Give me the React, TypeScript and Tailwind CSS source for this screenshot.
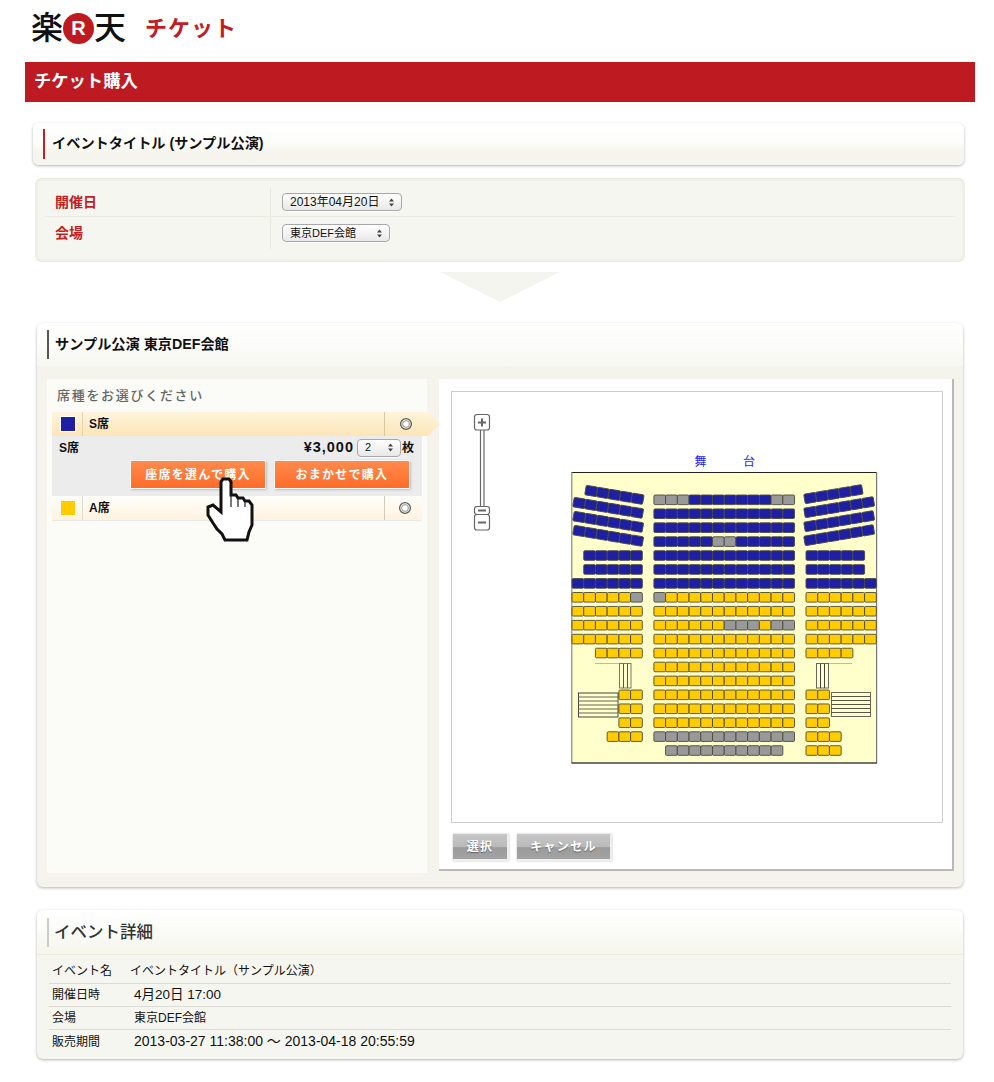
import React from "react";

const seatFill: Record<string, string> = {
  b: "#1f1fa3",
  y: "#ffcc00",
  g: "#999999",
};

const PITCH = 11.72;
const rowY = (i: number) => 495 + i * 13.93;

// one string per row, blank = no seat
const centerRows = [
  "gggbbbbbbbgg",
  "bbbbbbbbbbbb",
  "bbbbbbbbbbbb",
  "bbbbbggbbbbb",
  "bbbbbbbbbbbb",
  "bbbbbbbbbbbb",
  "bbbbbbbbbbbb",
  "gyyyyyyyyyyy",
  "yyyyyyyyyyyy",
  "yyyyyygggygg",
  "yyyyyyyyyyyy",
  "yyyyyyyyyyyy",
  "yyyyyyyyyyyy",
  "yyyyyyyyyyyy",
  "yyyyyyyyyyyy",
  "yyyyyyyyyyyy",
  "yyyyyyyyyyyy",
  "gggggggggggg",
  " gggggggggg ",
];

const leftRows: Record<number, string> = {
  4: " bbbbb",
  5: " bbbbb",
  6: "bbbbbb",
  7: "yyyyyg",
  8: "yyyyyy",
  9: "yyyyyy",
  10: "yyyyyy",
  11: "  yyyy",
  14: "    yy",
  15: "    yy",
  16: "    yy",
  17: "   yyy",
};

const rightRows: Record<number, string> = {
  4: "bbbbb",
  5: "bbbbb",
  6: "bbbbbb",
  7: "yyyyyy",
  8: "yyyyyy",
  9: "yyyyyy",
  10: "yyyyyy",
  11: "yyyy",
  14: "yy",
  15: "yy",
  16: "yy",
  17: "yyy",
  18: "yyy",
};

const slantRows = [
  { x: 585.5, y: 490, n: 5, a: 9.5 },
  { x: 573.5, y: 502, n: 6, a: 9.5 },
  { x: 573.5, y: 516, n: 6, a: 9.5 },
  { x: 573.5, y: 530, n: 6, a: 9.5 },
  { x: 804.5, y: 499, n: 5, a: -9.5 },
  { x: 804.5, y: 513, n: 6, a: -9.5 },
  { x: 804.5, y: 527, n: 6, a: -9.5 },
  { x: 804.5, y: 541, n: 6, a: -9.5 },
];

const Seat = ({ x, y, t }: { x: number; y: number; t: string }) =>
  t === " " ? null : (
    <rect
      x={x}
      y={y}
      width={PITCH}
      height={9.6}
      rx={1.2}
      fill={seatFill[t]}
      stroke="#4a4a40"
      strokeWidth={0.9}
    />
  );

const SeatRow = ({ x, i, row }: { x: number; i: number; row: string }) => (
  <>
    {row.split("").map((t, k) => (
      <Seat key={k} x={x + k * PITCH} y={rowY(i)} t={t} />
    ))}
  </>
);

const stairLines = [4, 8, 12, 16, 20];

const SeatMap = () => (
  <svg width={330} height={320} viewBox="560 450 330 320" className="block">
    <text x={694.5} y={466} fontSize={12} fill="#2222ee" fontFamily="'Noto Sans CJK JP', sans-serif">
      舞
    </text>
    <text x={743} y={466} fontSize={12} fill="#2222ee" fontFamily="'Noto Sans CJK JP', sans-serif">
      台
    </text>
    <rect x={572} y={472.5} width={304.5} height={290.5} fill="#ffffcc" />
    <line x1={571.5} y1={472.5} x2={877} y2={472.5} stroke="#222" />
    <line x1={571.8} y1={472} x2={571.8} y2={763} stroke="#8a8a80" strokeWidth={1.2} />
    <line x1={876.6} y1={472} x2={876.6} y2={763} stroke="#777" strokeWidth={1.2} />
    <line x1={571.5} y1={763} x2={877} y2={763} stroke="#444" strokeWidth={1.4} />

    {centerRows.map((row, i) => (
      <SeatRow key={i} x={653.9} i={i} row={row} />
    ))}
    {Object.entries(leftRows).map(([i, row]) => (
      <SeatRow key={i} x={572} i={Number(i)} row={row} />
    ))}
    {Object.entries(rightRows).map(([i, row]) => (
      <SeatRow key={i} x={806} i={Number(i)} row={row} />
    ))}
    {slantRows.map((r, i) => (
      <g key={i} transform={`rotate(${r.a} ${r.x} ${r.y})`}>
        {Array.from({ length: r.n }).map((_, k) => (
          <Seat key={k} x={r.x + k * PITCH} y={r.y - 4.8} t="b" />
        ))}
      </g>
    ))}

    {/* stairs left */}
    <line x1={595} y1={663.5} x2={619} y2={663.5} stroke="#bdbd9c" />
    <rect x={619.5} y={663.5} width={11.5} height={24.5} fill="none" stroke="#77776a" />
    <line x1={623.5} y1={664} x2={623.5} y2={688} stroke="#555" />
    <line x1={627.5} y1={664} x2={627.5} y2={688} stroke="#555" />
    <rect x={578.5} y={693} width={39.5} height={24} fill="none" stroke="#444" />
    {stairLines.map((d) => (
      <line key={d} x1={578.5} y1={693 + d} x2={618} y2={693 + d} stroke="#66665a" />
    ))}

    {/* stairs right */}
    <line x1={828.5} y1={663.5} x2={852} y2={663.5} stroke="#bdbd9c" />
    <rect x={816.5} y={663.5} width={12} height={24.5} fill="none" stroke="#66665a" />
    <line x1={820.5} y1={664} x2={820.5} y2={688} stroke="#444" />
    <line x1={824.5} y1={664} x2={824.5} y2={688} stroke="#444" />
    <rect x={831.5} y={692.5} width={39} height={24} fill="none" stroke="#66665a" />
    {stairLines.map((d) => (
      <line key={d} x1={831.5} y1={692.5 + d} x2={870.5} y2={692.5 + d} stroke="#55554a" />
    ))}
  </svg>
);

const ZoomSlider = () => (
  <svg width={20} height={125} viewBox="472 408 20 125" className="block" fill="#fff" stroke="#666" strokeWidth={1.2}>
    <line x1={480.5} y1={428} x2={480.5} y2={508} />
    <line x1={484} y1={428} x2={484} y2={508} />
    <rect x={474.5} y={414.5} width={15} height={15.5} rx={2.5} />
    <path d="M478 422.5h8M482 418.5v8" strokeWidth={2} />
    <rect x={474.5} y={506.5} width={15} height={8} rx={2.5} />
    <path d="M478 510.5h8" strokeWidth={2} />
    <rect x={474.5} y={514.5} width={15} height={15.5} rx={2.5} />
    <path d="M478 522.5h8" strokeWidth={2} />
  </svg>
);

const Hand = () => (
  <svg width={60} height={80} viewBox="0 0 60 80" className="absolute left-[200px] top-[470px]">
    <path
      d="M21 12l2-3h6l2 3v13h5l2 3h5l2 3h4l3 4v20l-3 7-2 8H25l-3-6-5-5-4-6-5-8v-8l5-2 8 7z"
      fill="#fff"
      stroke="#111"
      strokeWidth={3}
      strokeLinejoin="miter"
    />
    <path d="M31 25v12M38 28v9M45 32v5" stroke="#222" strokeWidth={1.2} fill="none" />
  </svg>
);

const Arrows = () => (
  <svg width={7} height={9} viewBox="0 0 7 9" className="shrink-0" fill="#444">
    <path d="M3.5 0.5L6 3.5H1zM3.5 8.5L1 5.5H6z" />
  </svg>
);

const Ring = () => (
  <svg width={14} height={14} viewBox="0 0 14 14" fill="none">
    <circle cx={7} cy={7} r={5.4} stroke="#5f5f5f" strokeWidth={1.3} />
    <circle cx={7} cy={7} r={3.4} fill="#fff" stroke="#8d949c" strokeWidth={1} />
  </svg>
);

const SelectBox = ({ label, className }: { label: string; className: string }) => (
  <div
    className={`flex items-center justify-between h-[18px] pl-[7px] pr-[6px] rounded-[4px] border border-[#a8a8a8] bg-gradient-to-b from-[#ffffff] to-[#e8e8e8] text-[#111] whitespace-nowrap shadow-[0_1px_0_rgba(255,255,255,.8)] ${className}`}
  >
    <span>{label}</span>
    <Arrows />
  </div>
);

const detailRows = [
  { label: "開催日時", value: "4月20日 17:00", cls: "text-[13.5px]" },
  { label: "会場", value: "東京DEF会館", cls: "text-[12px]" },
  { label: "販売期間", value: "2013-03-27 11:38:00 〜 2013-04-18 20:55:59", cls: "text-[14px]" },
];

const ActionButton = ({ label }: { label: string }) => (
  <div className="flex items-center justify-center w-[136px] h-[29px] bg-gradient-to-b from-[#ff8a4c] to-[#ff6c26] border border-[#fbfbfb] shadow-[1px_1px_2px_rgba(0,0,0,.2)] text-white text-[12px] font-bold tracking-[1.25px]">
    {label}
  </div>
);

const GrayButton = ({ label, className }: { label: string; className: string }) => (
  <div
    className={`flex items-center justify-center h-[27px] bg-[linear-gradient(#c6c6c6,#bababa_50%,#9b9b9b_55%,#a3a3a3)] border-r-2 border-b-2 border-[#eeeeee] shadow-[0_0_2px_rgba(0,0,0,.25)] text-white text-[12px] font-bold tracking-[1.3px] [text-shadow:0_1px_1px_rgba(0,0,0,.4)] ${className}`}
  >
    {label}
  </div>
);

export default function App() {
  return (
    <div className="relative w-[994px] h-[1082px] bg-white font-['Liberation_Sans','Noto_Sans_CJK_JP',sans-serif] text-[#111]">
      {/* logo */}
      <div className="flex items-center h-[62px] pl-[31px] pb-[6px]">
        <span className="text-[32px] leading-none font-medium text-[#111] w-[32px]">楽</span>
        <span className="flex items-center justify-center w-[31px] h-[31px] rounded-full bg-[#bf1a20] text-white text-[20px] font-bold">
          R
        </span>
        <span className="text-[32px] leading-none font-medium text-[#111] w-[32px]">天</span>
        <span className="ml-[19px] text-[22px] font-bold tracking-[1px] text-[#c41c22]">チケット</span>
      </div>

      <div className="flex items-center ml-[25px] w-[950px] h-10 pl-[9px] bg-[#be1a21] text-white text-[17.3px] font-bold">
        チケット購入
      </div>

      {/* event title */}
      <div className="flex items-center ml-[33px] mt-[21px] w-[931px] h-[42px] pl-[10px] rounded-md bg-[linear-gradient(#ffffff,#fdfdfb_45%,#f5f5ed_70%,#f6f6f0)] shadow-[0_1px_3px_rgba(0,0,0,.3)]">
        <div className="w-[2px] h-[30px] bg-[#c01f26]" />
        <div className="ml-[7px] text-[14.2px] font-bold">イベントタイトル (サンプル公演)</div>
      </div>

      {/* date and place */}
      <div className="ml-[35px] mt-[13px] w-[930px] h-[84px] px-[7px] pt-[7px] rounded-md bg-[#f6f6f0] border-[3px] border-[#efefe5]">
        <div className="flex h-[29px] border-b border-[#ecece2]">
          <div className="flex items-center w-[226px] pl-[10px] text-[14px] font-bold text-[#c01f26] border-r border-[#e8e8de]">
            開催日
          </div>
          <div className="flex items-center pl-[11px]">
            <SelectBox label="2013年04月20日" className="w-[120px] text-[12px]" />
          </div>
        </div>
        <div className="flex h-[32px]">
          <div className="flex items-center w-[226px] pl-[10px] text-[14px] font-bold text-[#c01f26] border-r border-[#e8e8de]">
            会場
          </div>
          <div className="flex items-center pl-[11px]">
            <SelectBox label="東京DEF会館" className="w-[108px] text-[11px]" />
          </div>
        </div>
      </div>

      {/* down arrow */}
      <div className="ml-[440px] mt-[10px] w-0 h-0 border-l-[60px] border-r-[60px] border-t-[30px] border-l-transparent border-r-transparent border-t-[#f5f5ef]" />

      {/* seat picker */}
      <div className="ml-[37px] mt-[21px] w-[926px] h-[564px] rounded-md bg-[#f4f4ec] shadow-[0_1px_3px_rgba(0,0,0,.3)]">
        <div className="flex items-center h-[43px] pl-[10px] rounded-t-md bg-gradient-to-b from-[#ffffff] to-[#f8f8f2]">
          <div className="w-[2px] h-[29px] bg-[#555]" />
          <div className="ml-[6px] text-[14.2px] font-bold">サンプル公演 東京DEF会館</div>
        </div>
        <div className="flex gap-[12px] pl-[10px] pt-[13px]">
          <div className="w-[380px] h-[494px] px-[5px] bg-[#fbfbf8]">
            <div className="flex items-center h-[33px] pl-[5px] text-[13px] font-medium tracking-[1.7px] text-[#666]">
              席種をお選びください
            </div>
            <div className="flex items-center w-[388px] h-[24px] bg-gradient-to-b from-[#fff4dc] to-[#fde5b6] [clip-path:polygon(0_0,96.9%_0,100%_50%,96.9%_100%,0_100%)]">
              <div className="flex items-center justify-center w-[30px] pl-[1px]">
                <div className="w-[16px] h-[16px] bg-[#1f1fa3] border border-white" />
              </div>
              <div className="flex items-center w-[302px] h-full pl-[6px] border-l border-[#e3d5b4] text-[12px] font-bold">
                S席
              </div>
              <div className="flex items-center justify-center w-[42px] h-full border-l border-[#d8c9a6]">
                <Ring />
              </div>
            </div>
            <div className="w-[370px] h-[60px] bg-[#ececec]">
              <div className="flex items-center justify-between h-[23px] pl-[7px] pr-[8px] font-bold">
                <span className="text-[12px]">S席</span>
                <div className="flex items-center">
                  <span className="text-[14.5px] tracking-[1px] mr-[3px]">¥3,000</span>
                  <SelectBox label="2" className="w-[44px] text-[11px] font-normal" />
                  <span className="text-[12px] ml-[1px]">枚</span>
                </div>
              </div>
              <div className="flex justify-end gap-[8px] pr-[12px] mt-[1px]">
                <ActionButton label="座席を選んで購入" />
                <ActionButton label="おまかせで購入" />
              </div>
            </div>
            <div className="flex items-center w-[370px] h-[25px] bg-gradient-to-b from-[#fffefb] to-[#fff3df] border-b border-[#e8e8e4]">
              <div className="flex items-center justify-center w-[30px] pl-[1px]">
                <div className="w-[16px] h-[16px] bg-[#ffcc00] border border-white" />
              </div>
              <div className="flex items-center w-[302px] h-full pl-[6px] border-l border-[#e0dccf] text-[12px] font-bold">
                A席
              </div>
              <div className="flex items-center justify-center w-[38px] pl-[2px] h-full border-l border-[#cfcabb]">
                <Ring />
              </div>
            </div>
          </div>

          <div className="w-[515px] h-[492px] p-[12px] bg-white border-r-2 border-b-2 border-[#b9b9b9]">
            <div className="flex w-[492px] h-[432px] pl-[20px] pt-[16px] border border-[#cccccc]">
              <ZoomSlider />
              <div className="ml-[68px] mt-[42px]">
                <SeatMap />
              </div>
            </div>
            <div className="flex gap-[8px] mt-[11px] ml-[2px]">
              <GrayButton label="選択" className="w-[56px]" />
              <GrayButton label="キャンセル" className="w-[95px]" />
            </div>
          </div>
        </div>
      </div>

      {/* event details */}
      <div className="ml-[37px] mt-[23px] w-[926px] h-[149px] rounded-md bg-[#f6f6f0] shadow-[0_1px_3px_rgba(0,0,0,.3)]">
        <div className="flex items-center h-[45px] pl-[10px] rounded-t-md bg-gradient-to-b from-[#ffffff] to-[#f6f6ee] border-b border-[#ebebd9]">
          <div className="w-[2px] h-[29px] bg-[#cccccc]" />
          <div className="ml-[5px] text-[16.5px] font-medium text-[#333]">イベント詳細</div>
        </div>
        <div className="mx-[12px]">
          <div className="flex items-center h-[29px] pt-[3px] pl-[3px] text-[12px] border-b border-[#dcdcd4]">
            <div className="w-[78px]">イベント名</div>
            <div>イベントタイトル（サンプル公演）</div>
          </div>
          {detailRows.map((r, i) => (
            <div
              key={r.label}
              className={`flex items-center h-[23px] pl-[3px] text-[12px] ${i < 2 ? "border-b border-[#dcdcd4]" : ""}`}
            >
              <div className="w-[82px]">{r.label}</div>
              <div className={r.cls}>{r.value}</div>
            </div>
          ))}
        </div>
      </div>

      <Hand />
    </div>
  );
}
